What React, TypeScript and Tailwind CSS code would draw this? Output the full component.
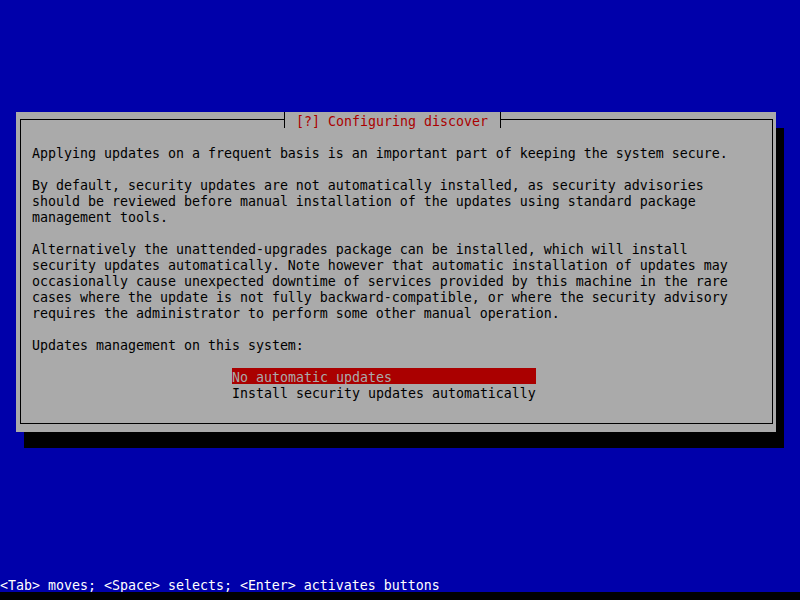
const mono = { fontFamily: '"DejaVu Sans Mono", "Liberation Mono", monospace' }

const body: string[] = [
  'Applying updates on a frequent basis is an important part of keeping the system secure.',
  '',
  'By default, security updates are not automatically installed, as security advisories',
  'should be reviewed before manual installation of the updates using standard package',
  'management tools.',
  '',
  'Alternatively the unattended-upgrades package can be installed, which will install',
  'security updates automatically. Note however that automatic installation of updates may',
  'occasionally cause unexpected downtime of services provided by this machine in the rare',
  'cases where the update is not fully backward-compatible, or where the security advisory',
  'requires the administrator to perform some other manual operation.',
  '',
  'Updates management on this system:',
  '',
]

const choices = ['No automatic updates', 'Install security updates automatically']

// 16px text cells; the taller line box drops the glyphs 2px like the console font
function Line({ text }: { text: string }) {
  return <div className="h-[16px] leading-[20px] whitespace-pre">{text}</div>
}

export default function App() {
  return (
    <div
      className="w-[800px] h-[600px] bg-[#0000aa] flex flex-col text-[13.29px] text-black overflow-hidden"
      style={mono}
    >
      <div className="pt-[112px] pl-[16px]">
        <div className="relative w-[760px] h-[320px] bg-[#aaaaaa] shadow-[8px_16px_0_0_#000] px-[16px] pt-[32px]">
          {/* frame */}
          <div className="absolute left-[4px] top-[7px] right-[3px] bottom-[8px] border border-black" />

          {/* title */}
          <div className="absolute left-[268px] top-0 w-[217px] h-[16px] bg-[#aaaaaa] border-l border-r border-black pl-[11px] leading-[20px] text-[#aa0000] whitespace-pre">
            [?] Configuring discover
          </div>

          <div className="relative flex flex-col">
            {body.map((t, i) => (
              <Line key={i} text={t} />
            ))}
            <div className="pl-[200px] flex flex-col items-start">
              {choices.map((c, i) => (
                <div
                  key={c}
                  className={
                    i === 0
                      ? 'w-[304px] h-[16px] leading-[20px] whitespace-pre bg-[#aa0000] text-[#aaaaaa]'
                      : 'w-[304px] h-[16px] leading-[20px] whitespace-pre'
                  }
                >
                  {c}
                </div>
              ))}
            </div>
          </div>
        </div>
      </div>

      <div className="flex-1" />
      <div className="h-[16px] leading-[20px] whitespace-pre text-white">
        {'<Tab> moves; <Space> selects; <Enter> activates buttons'}
      </div>
      <div className="h-[8px] bg-black" />
    </div>
  )
}
